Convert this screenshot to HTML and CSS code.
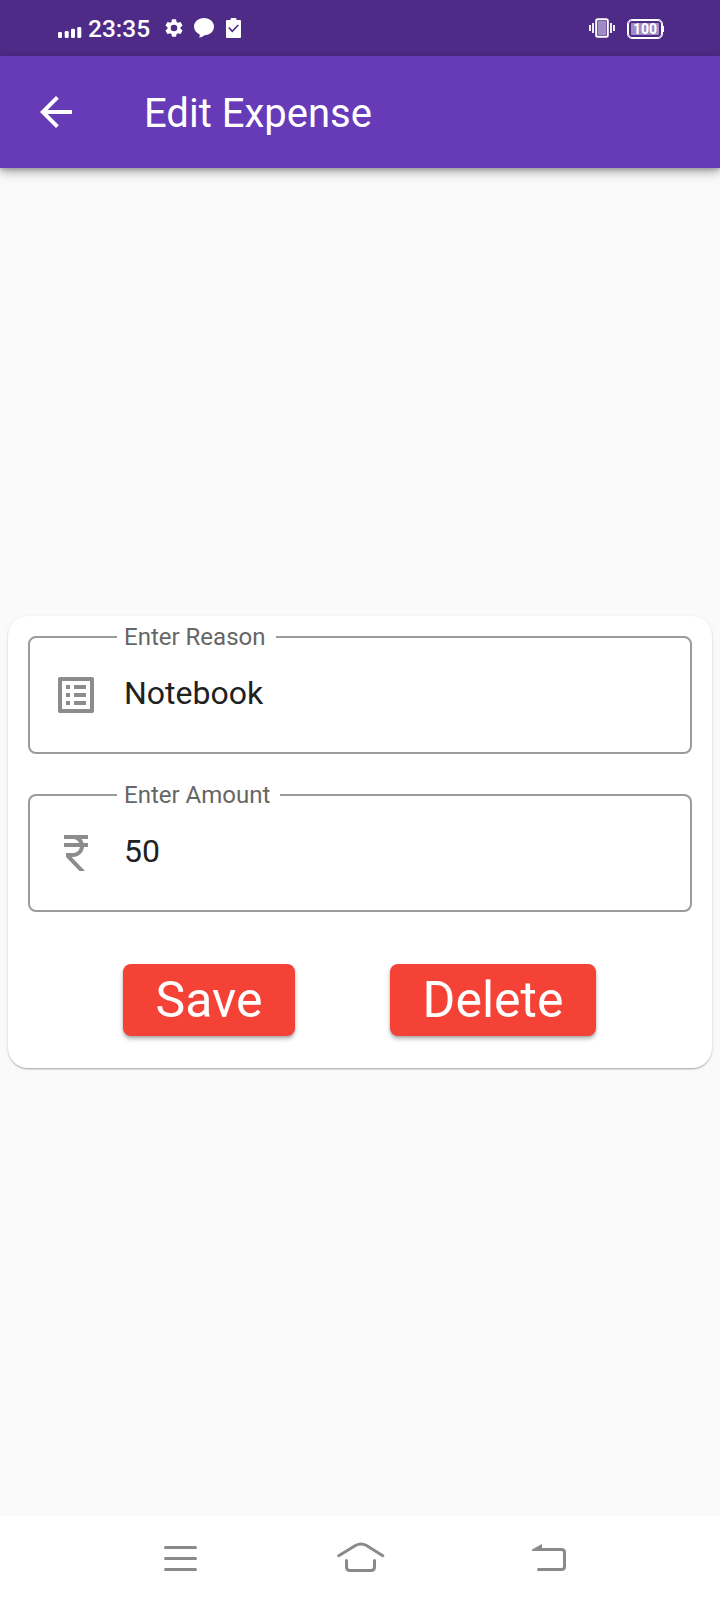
FILE: index.html
```html
<!DOCTYPE html>
<html lang="en">
<head>
<meta charset="utf-8">
<title>Edit Expense</title>
<link rel="stylesheet" href="styles.css">
</head>
<body>
<div class="screen">
  <div class="status">
    <svg class="signal" width="24" height="12" viewBox="0 0 24 12" fill="#fff"><rect y="6" width="4" height="6" rx="1.3"/><rect x="6.700" y="5" width="4" height="7" rx="1.3"/><rect x="13" y="2.800" width="4" height="9.200" rx="1.3"/><rect x="19.300" y="1" width="4" height="11" rx="1.3"/></svg>
    <span class="clock">23:35</span>
    <svg class="gear" width="20" height="20" viewBox="1 1 22 22" fill="#fff"><path d="M19.14 12.94c.04-.3.06-.61.06-.94 0-.32-.02-.64-.07-.94l2.030-1.580a.49.49 0 0 0 .12-.61l-1.920-3.320a.488.488 0 0 0-.59-.22l-2.390.96c-.5-.38-1.030-.7-1.620-.94l-.36-2.540a.484.484 0 0 0-.48-.41h-3.840c-.24 0-.43.17-.47.41l-.36 2.540c-.59.24-1.130.57-1.620.94l-2.390-.96c-.22-.08-.47 0-.59.22L2.740 8.870c-.12.21-.08.47.12.61l2.030 1.580c-.05.3-.09.63-.09.94s.02.64.07.94l-2.030 1.580a.49.49 0 0 0-.12.61l1.920 3.320c.12.22.37.29.59.22l2.390-.96c.5.38 1.030.7 1.620.94l.36 2.540c.05.24.24.41.48.41h3.840c.24 0 .44-.17.47-.41l.36-2.540c.59-.24 1.130-.56 1.620-.94l2.390.96c.22.08.47 0 .59-.22l1.920-3.320c.12-.22.07-.47-.12-.61l-2.010-1.580zM12 15.600A3.600 3.600 0 1 1 12 8.400a3.600 3.600 0 0 1 0 7.200z"/></svg>
    <svg class="chat" width="20" height="20" viewBox="0 0 20 20" fill="#fff"><path d="M10 0c5.700 0 10 3.700 10 8.600s-4.300 8.700-9.500 8.700c-1.200 1-3 2-5.300 2.200.5-.8.7-2 .5-3C2.200 15 0 12.200 0 8.600 0 3.700 4.300 0 10 0z"/></svg>
    <svg class="clip" width="15" height="20" viewBox="0 0 15 20"><path d="M1 2h3.500V1q0-1 1-1h4q1 0 1 1v1H14q1 0 1 1v16q0 1-1 1H1q-1 0-1-1V3q0-1 1-1z" fill="#fff"/><path d="M2.800 9.500l3.500 3.800 6-6.300" fill="none" stroke="#4d2b87" stroke-width="1.700"/></svg>
    <svg class="vibrate" width="26" height="20" viewBox="0 0 26 20"><rect x="7.200" y="1.200" width="11.600" height="17.600" rx="1.500" fill="#4d2b87" stroke="#fff" stroke-width="2"/><rect x="9" y="3" width="8" height="14" fill="#a08cc4"/><path d="M1 7v6M4 5v10M22 5v10M25 7v6" stroke="#fff" stroke-width="1.800"/></svg>
    <div class="battery"><span class="level">100</span></div><i class="tip"></i>
  </div>
  <header class="appbar">
    <svg width="48" height="48" viewBox="0 0 24 24" fill="#fff"><path d="M20 11H7.830l5.590-5.590L12 4l-8 8 8 8 1.410-1.410L7.830 13H20v-2z"/></svg>
    <h1>Edit Expense</h1>
  </header>
  <main class="content">
    <section class="card">
      <fieldset class="field">
        <legend class="reason">Enter Reason</legend>
        <div class="row">
          <svg width="48" height="48" viewBox="0 0 24 24" fill="#8c8c8c"><path d="M19 5v14H5V5h14m1.100-2H3.900c-.5 0-.9.4-.9.9v16.200c0 .4.4.9.9.9h16.200c.4 0 .9-.5.9-.9V3.900c0-.5-.5-.9-.9-.9zM11 7h6v2h-6V7zm0 4h6v2h-6v-2zm0 4h6v2h-6zM7 7h2v2H7zm0 4h2v2H7zm0 4h2v2H7z"/></svg>
          <span class="value">Notebook</span>
        </div>
      </fieldset>
      <fieldset class="field">
        <legend class="amount">Enter Amount</legend>
        <div class="row">
          <svg width="48" height="48" viewBox="0 0 24 24" fill="#8c8c8c"><path d="M13.660 7c-.56-1.180-1.760-2-3.160-2H6V3h12v2h-3.260c.48.58.84 1.260 1.050 2H18v2h-2.020c-.25 2.800-2.610 5-5.480 5h-.73l6.730 7h-2.770L7 14v-2h3.500c1.760 0 3.220-1.300 3.460-3H6V7h7.660z"/></svg>
          <span class="value">50</span>
        </div>
      </fieldset>
      <div class="actions">
        <button class="btn save">Save</button>
        <button class="btn delete">Delete</button>
      </div>
    </section>
  </main>
  <nav class="nav">
    <svg class="menu" width="34" height="26" viewBox="0 0 34 26" fill="none" stroke="#8a8a8a" stroke-width="3" stroke-linecap="round"><path d="M1.500 1.500h30M1.500 12.500h30M1.500 23.500h30"/></svg>
    <svg class="home" width="48" height="30" viewBox="0 0 48 30" fill="none" stroke="#8a8a8a" stroke-width="3" stroke-linecap="round"><path d="M1.700 13.700L18.500 3.500Q24 .500 29.500 3.500L45.800 13.700M9.500 18.500V25Q9.500 28.500 13 28.500H34Q37.500 28.500 37.500 25V18.500"/></svg>
    <svg class="back" width="34" height="28" viewBox="0 0 34 28"><path d="M6 5.500H29.500Q32.500 5.500 32.500 8.500V22.500Q32.500 25.500 29.500 25.500H6.500" fill="none" stroke="#8a8a8a" stroke-width="3" stroke-linecap="round"/><path d="M0 7V5.500L10 0V7z" fill="#8a8a8a"/></svg>
  </nav>
</div>
</body>
</html>
```
FILE: styles.css
```css
* { box-sizing: border-box; }
body { margin: 0; font-family: Roboto, sans-serif; background: #fafafa; }
svg { display: block; flex: none; }
.screen { width: 720px; height: 1600px; display: flex; flex-direction: column; overflow: hidden; }
.status { height: 56px; flex: none; background: #4d2b87; display: flex; align-items: center; padding-left: 58px; color: #fff; }
.signal { margin-top: 8px; }
.clock { width: 62px; margin: 2px 0 0 6px; font-size: 24.5px; font-weight: 500; line-height: 30px; white-space: nowrap; }
.gear { margin-left: 14px; }
.chat { margin-left: 10px; }
.clip { margin-left: 12px; }
.vibrate { margin-left: 348px; }
.battery { width: 34px; height: 18px; margin: 2px 0 0 13px; padding: 1px; border: 1px solid #fff; outline: .5px solid #fff; border-radius: 4px; }
.level { display: block; height: 12px; margin: 1px; background: #a08cc4; border-radius: 1px; font-size: 14px; line-height: 13px; font-weight: 700; text-align: center; }
.tip { width: 1px; height: 6px; margin: 2px 0 0 1px; background: #fff; }
.appbar { height: 112px; flex: none; background: #673ab7; display: flex; align-items: center; padding-left: 32px; box-shadow: 0 4px 10px rgba(0,0,0,.32), 0 2px 4px rgba(0,0,0,.16); position: relative; }
.appbar h1 { margin: 3px 0 0 64px; color: #fff; font-size: 40px; font-weight: 400; line-height: 48px; white-space: nowrap; }
.content { flex: 1; display: flex; align-items: center; padding: 0 8px; }
.card { width: 704px; height: 452px; padding: 7px 20px 0; border-radius: 20px; background: #fff; box-shadow: 0 2px 2px -1px rgba(0,0,0,.2), 0 1px 2px rgba(0,0,0,.14), 0 1px 4px rgba(0,0,0,.06); }
.field { height: 131px; min-width: 0; margin: 0; padding: 0 22px; border: 2px solid #9b9b9b; border-radius: 8px; }
.field + .field { margin-top: 27px; }
.field legend { margin-left: 65px; padding: 0 0 0 7px; font-size: 24px; line-height: 28px; height: 28px; color: #666; white-space: nowrap; }
.field .reason { width: 159px; }
.field .amount { width: 163px; }
.row { height: 100px; display: flex; align-items: center; padding-bottom: 12px; }
.value { margin: -5px 0 0 24px; font-size: 32px; line-height: 38px; color: #212121; }
.actions { display: flex; justify-content: center; gap: 95px; margin-top: 52px; }
.btn { height: 72px; padding: 0; border: 0; border-radius: 8px; background: #f44336; color: #fff; font: 400 50px/68px Roboto, sans-serif; box-shadow: 0 3px 4px rgba(0,0,0,.28), 0 1px 2px rgba(0,0,0,.12); }
.save { width: 172px; margin-left: -1px; }
.delete { width: 206px; }
.nav { height: 84px; flex: none; background: #fff; display: flex; align-items: center; padding-left: 164px; }
.menu { margin-top: 2px; }
.home { margin-left: 139px; margin-top: -3px; }
.back { margin-left: 147px; }
```
